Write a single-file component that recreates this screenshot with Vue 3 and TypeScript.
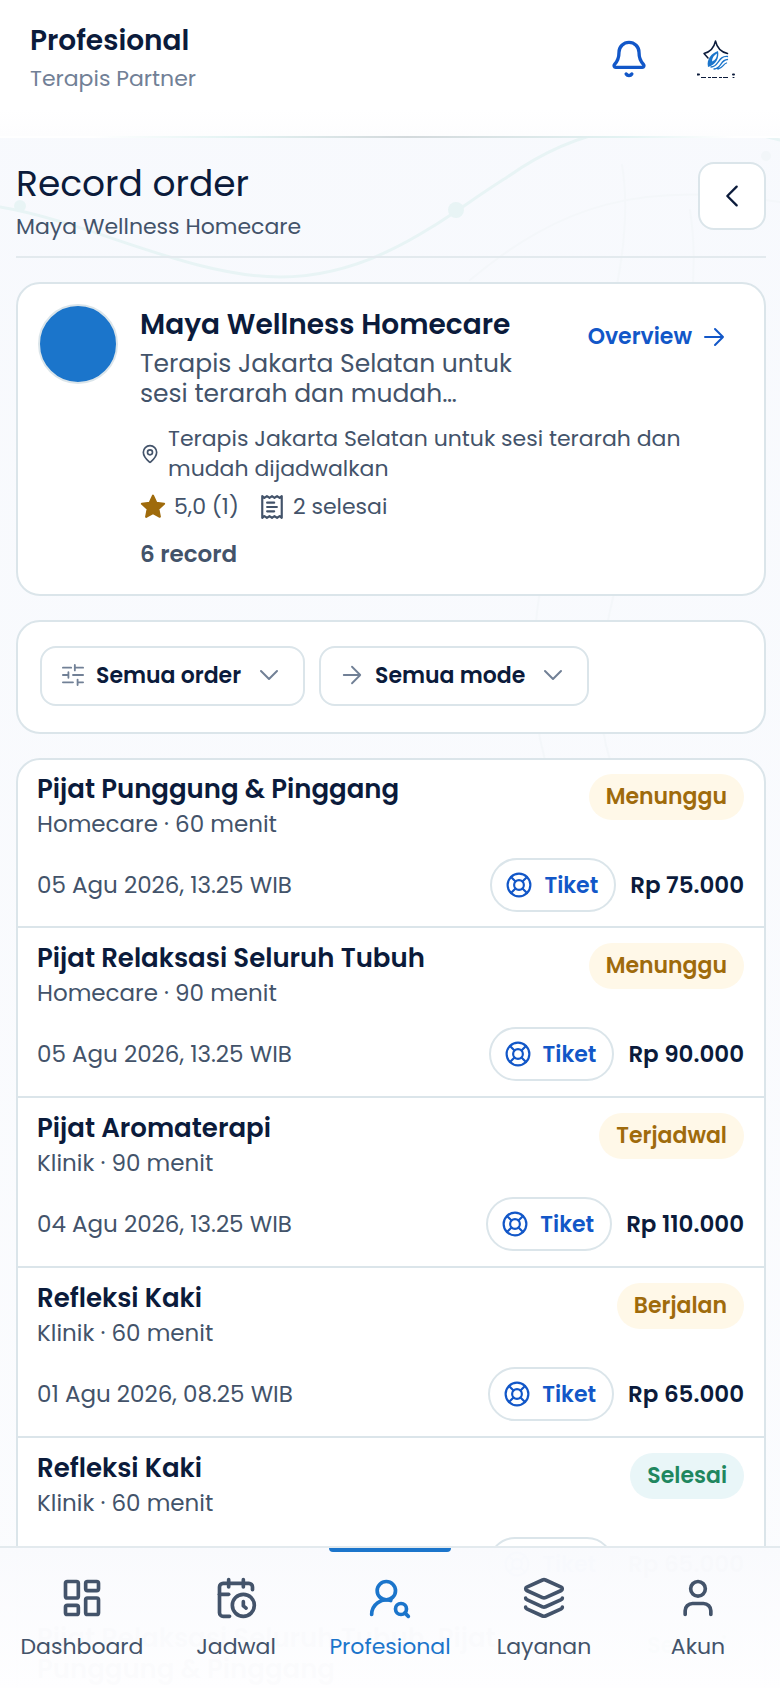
<script setup lang="ts">
interface Order {
  id: number
  title: string
  meta: string
  date: string
  price: string
  status: string
  tone: 'warn' | 'ok'
}

const orders: Order[] = [
  { id: 1, title: 'Pijat Punggung & Pinggang', meta: 'Homecare · 60 menit', date: '05 Agu 2026, 13.25 WIB', price: 'Rp 75.000', status: 'Menunggu', tone: 'warn' },
  { id: 2, title: 'Pijat Relaksasi Seluruh Tubuh', meta: 'Homecare · 90 menit', date: '05 Agu 2026, 13.25 WIB', price: 'Rp 90.000', status: 'Menunggu', tone: 'warn' },
  { id: 3, title: 'Pijat Aromaterapi', meta: 'Klinik · 90 menit', date: '04 Agu 2026, 13.25 WIB', price: 'Rp 110.000', status: 'Terjadwal', tone: 'warn' },
  { id: 4, title: 'Refleksi Kaki', meta: 'Klinik · 60 menit', date: '01 Agu 2026, 08.25 WIB', price: 'Rp 65.000', status: 'Berjalan', tone: 'warn' },
  { id: 5, title: 'Refleksi Kaki', meta: 'Klinik · 60 menit', date: '', price: 'Rp 65.000', status: 'Selesai', tone: 'ok' },
  { id: 6, title: 'Pijat Relaksasi Seluruh Tubuh, Pijat Punggung & Pinggang', meta: '', date: '', price: '', status: 'Selesai', tone: 'ok' },
]

interface Tab {
  label: string
  paths: string[]
  active?: boolean
}

const tabs: Tab[] = [
  { label: 'Dashboard', paths: ['M4 3h5a1 1 0 0 1 1 1v7a1 1 0 0 1-1 1H4a1 1 0 0 1-1-1V4a1 1 0 0 1 1-1z', 'M4 16h5a1 1 0 0 1 1 1v3a1 1 0 0 1-1 1H4a1 1 0 0 1-1-1v-3a1 1 0 0 1 1-1z', 'M15 12h5a1 1 0 0 1 1 1v7a1 1 0 0 1-1 1h-5a1 1 0 0 1-1-1v-7a1 1 0 0 1 1-1z', 'M15 3h5a1 1 0 0 1 1 1v3a1 1 0 0 1-1 1h-5a1 1 0 0 1-1-1V4a1 1 0 0 1 1-1z'] },
  { label: 'Jadwal', paths: ['M21 7.500V6a2 2 0 0 0-2-2H5a2 2 0 0 0-2 2v14a2 2 0 0 0 2 2h3.500', 'M16 2v4', 'M8 2v4', 'M3 10h5', 'M16 14v2.300l1.500 1.200', 'M22 16a6 6 0 1 1-12 0 6 6 0 0 1 12 0z'] },
  { label: 'Profesional', active: true, paths: ['M15 8a5 5 0 1 1-10 0 5 5 0 0 1 10 0z', 'M2 21a8 8 0 0 1 10.434-7.620', 'M21 18a3 3 0 1 1-6 0 3 3 0 0 1 6 0z', 'm22 22-1.900-1.900'] },
  { label: 'Layanan', paths: ['M12.800 2.200a2 2 0 0 0-1.600 0L2.600 6.100a1 1 0 0 0 0 1.800l8.600 3.900a2 2 0 0 0 1.600 0l8.600-3.900a1 1 0 0 0 0-1.800z', 'M2 12a1 1 0 0 0 .6.900l8.600 3.900a2 2 0 0 0 1.600 0l8.600-3.900A1 1 0 0 0 22 12', 'M2 17a1 1 0 0 0 .6.900l8.600 3.900a2 2 0 0 0 1.600 0l8.600-3.900A1 1 0 0 0 22 17'] },
  { label: 'Akun', paths: ['M19 21v-2a4 4 0 0 0-4-4H9a4 4 0 0 0-4 4v2', 'M16 7a4 4 0 1 1-8 0 4 4 0 0 1 8 0z'] },
]
</script>

<template>
  <div class="shell">
    <svg class="decor" viewBox="0 0 780 1688" preserveAspectRatio="none" fill="none" aria-hidden="true">
      <g stroke="#e8f4f5" stroke-width="3">
        <path d="M0 207C90 222 190 277 280 277C380 277 450 212 506 178C570 132 650 106 780 140" />
      </g>
      <circle cx="20" cy="206" r="6" fill="#e8f4f5" stroke="none" />
      <circle cx="456" cy="210" r="8" fill="#e8f4f5" stroke="none" />
      <circle cx="766" cy="156" r="5" fill="#f2f6f9" stroke="none" />
      <g stroke="#f4f7fa" stroke-width="2">
        <path d="M470 280C560 205 640 180 780 202" />
        <path d="M622 165C650 330 490 560 545 760" />
        <path d="M690 210C720 400 560 600 610 760" />
      </g>
    </svg>

    <header class="topbar">
      <div class="who">
        <strong class="who-title">Profesional</strong>
        <span class="who-sub">Terapis Partner</span>
      </div>
      <button class="bell" type="button" aria-label="Notifikasi">
        <svg viewBox="0 0 24 24"><path d="M10.300 21a2 2 0 0 0 3.400 0" /><path d="M3.300 15.300A1 1 0 0 0 4 17h16a1 1 0 0 0 .7-1.700C19.400 14 18 12.500 18 8A6 6 0 0 0 6 8c0 4.500-1.400 6-2.700 7.300" /></svg>
      </button>
      <a class="logo" href="#" aria-label="Beranda">
        <svg viewBox="0 0 40 40" fill="none">
          <path d="M11 19L7 14.500C13 13 17 9 18.500 2C20 9 24 13 30.500 14.500" stroke="#0b1b3b" stroke-width="1.500" />
          <path d="M11 28C9 20 15 14 21 12C22.500 19 19 25.500 11 28z" fill="#1b75cb" stroke="none" />
          <path d="M15 22.500C15 19 17 16 20 14.500C20 18.500 18.500 21 15 22.500z" fill="#fff" stroke="none" />
          <path d="M14 28C22 28 21 16.500 30.500 17.500M17 30C25 29 23 21 30.500 20.500M21 30C26 29 26 25 29.500 24" stroke="#1b75cb" stroke-width="1.300" />
          <path d="M0 35.500h2M36 35.500h1" stroke="#0b1b3b" stroke-width="2" />
          <path d="M4 38.500h28" stroke="#0b1b3b" stroke-width="1" stroke-linecap="butt" stroke-dasharray="5 2 3 1" />
          <path d="M36 38.500h1" stroke="#0b1b3b" stroke-width="1" />
        </svg>
      </a>
    </header>

    <main class="content">
      <div class="heading">
        <div>
          <h1>Record order</h1>
          <p>Maya Wellness Homecare</p>
        </div>
        <button class="back" type="button" aria-label="Kembali">
          <svg viewBox="0 0 24 24"><path d="m16 4-8 8 8 8" /></svg>
        </button>
      </div>

      <section class="card profile">
        <div class="avatar"></div>
        <div class="details">
          <div class="details-top">
            <div>
              <h2>Maya Wellness Homecare</h2>
              <p class="tagline">Terapis Jakarta Selatan untuk<br />sesi terarah dan mudah…</p>
            </div>
            <a class="overview" href="#">Overview
              <svg viewBox="0 0 24 24"><path d="M3 12h18M13 4l8 8-8 8" /></svg>
            </a>
          </div>
          <div class="place">
            <svg viewBox="0 0 24 24"><path d="M20 10c0 5-5.500 10.200-7.400 11.800a1 1 0 0 1-1.200 0C9.500 20.200 4 15 4 10a8 8 0 0 1 16 0" /><circle cx="12" cy="10" r="3" /></svg>
            <span>Terapis Jakarta Selatan untuk sesi terarah dan mudah dijadwalkan</span>
          </div>
          <div class="stats">
            <svg class="star" viewBox="0 0 24 24"><path d="m12 1.500 3 6.600 7.200.9-5.300 4.900 1.400 7.100L12 17.600l-6.300 3.400 1.400-7.100L1.800 9l7.200-.9z" /></svg>
            <span>5,0 (1)</span>
            <svg class="receipt" viewBox="0 0 24 24"><path d="M3 2l2 1.500L7.300 2 9.700 3.500 12 2l2.300 1.500L16.700 2 19 3.500 21 2v20l-2-1.500-2.300 1.500-2.400-1.500L12 22l-2.300-1.500L7.300 22 5 20.500 3 22zM7.500 8H14M7.500 12h9M7.500 16H14" /></svg>
            <span>2 selesai</span>
          </div>
          <strong class="count">6 record</strong>
        </div>
      </section>

      <section class="card filters">
        <button class="filter" type="button">
          <svg viewBox="0 0 24 24"><path d="M1 4h9M14 1v6M14 4h9M1 12h6M7 9v6M12 12h11M1 20h11M17 17v6M17 20h6" /></svg>
          <span>Semua order</span>
          <svg class="chev" viewBox="0 0 24 24"><path d="m4 8 8 8 8-8" /></svg>
        </button>
        <button class="filter" type="button">
          <svg viewBox="0 0 24 24"><path d="M3 12h18M12 3l9 9-9 9" /></svg>
          <span>Semua mode</span>
          <svg class="chev" viewBox="0 0 24 24"><path d="m4 8 8 8 8-8" /></svg>
        </button>
      </section>

      <section class="card orders">
        <article v-for="o in orders" :key="o.id" class="order">
          <div class="order-top">
            <div>
              <h3>{{ o.title }}</h3>
              <p>{{ o.meta }}</p>
            </div>
            <span class="badge" :class="o.tone">{{ o.status }}</span>
          </div>
          <div class="order-bottom">
            <time>{{ o.date }}</time>
            <button class="ticket" type="button">
              <svg viewBox="0 0 24 24"><circle cx="12" cy="12" r="10.500" /><circle cx="12" cy="12" r="4.500" /><path d="m4.600 4.600 4.200 4.200M15.200 8.800l4.200-4.200M15.200 15.200l4.200 4.200M8.800 15.200l-4.200 4.200" /></svg>
              Tiket
            </button>
            <strong>{{ o.price }}</strong>
          </div>
        </article>
      </section>
    </main>

    <nav class="tabs">
      <a v-for="t in tabs" :key="t.label" href="#" class="tab" :class="{ active: t.active }">
        <svg viewBox="0 0 24 24"><path v-for="d in t.paths" :key="d" :d="d" /></svg>
        <span>{{ t.label }}</span>
      </a>
    </nav>
  </div>
</template>

<style>
body {
  margin: 0;
  background: #f9fafd;
}
</style>

<style scoped>
.shell {
  position: relative;
  display: flex;
  flex-direction: column;
  height: 100vh;
  overflow: hidden;
  background: linear-gradient(#f7f9fd, #fbfcfe);
  color: #0b1b3b;
  font-family: Poppins, Inter, "Noto Sans", sans-serif;
  font-size: 22px;
}
.shell * {
  box-sizing: border-box;
}
svg {
  fill: none;
  stroke: currentColor;
  stroke-width: 2;
  stroke-linecap: round;
  stroke-linejoin: round;
  flex: none;
}
.decor {
  position: absolute;
  inset: 0;
  width: 100%;
  height: 100%;
}
h1, h2, h3, p {
  margin: 0;
}
button {
  font: inherit;
  color: inherit;
  cursor: pointer;
}
a {
  color: inherit;
  text-decoration: none;
}
.topbar {
  position: relative;
  display: flex;
  align-items: center;
  flex: none;
  height: 138px;
  padding: 0 43px 18px 30px;
  background: linear-gradient(#fff 80%, #fdfdfe);
  border-bottom: 2px solid;
  border-image: linear-gradient(90deg, #fff 12%, #e3f3f3 30%, #d3d9dc 52%, #e3f3f3 80%, #fff 94%) 1;
}
.who {
  display: flex;
  flex-direction: column;
  flex: 1;
}
.who-title {
  font-size: 28px;
  line-height: 40px;
  font-weight: 600;
}
.who-sub {
  line-height: 36px;
  color: #718096;
}
.bell {
  display: flex;
  padding: 0;
  margin-right: 48px;
  border: 0;
  background: none;
  color: #1257c8;
}
.bell svg {
  width: 40px;
  height: 40px;
}
.logo svg {
  display: block;
  width: 40px;
  height: 40px;
}
.content {
  position: relative;
  display: flex;
  flex-direction: column;
  flex: none;
  gap: 24px;
  padding: 24px 14px 0 16px;
}
.heading {
  display: flex;
  justify-content: space-between;
  align-items: flex-start;
  height: 96px;
  border-bottom: 2px solid #e3eaee;
}
h1 {
  font-size: 36px;
  line-height: 44px;
  font-weight: 400;
}
.heading p {
  line-height: 42px;
  color: #43536a;
}
.back {
  display: flex;
  align-items: center;
  justify-content: center;
  width: 68px;
  height: 68px;
  padding: 0;
  border: 2px solid #dbe5ea;
  border-radius: 16px;
  background: #fff;
}
.back svg {
  width: 28px;
  height: 28px;
}
.card {
  border: 2px solid #dbe5ea;
  border-radius: 24px;
  background: #fff;
}
.profile {
  display: flex;
  gap: 22px;
  padding: 20px 38px 20px 20px;
}
.avatar {
  flex: none;
  width: 80px;
  height: 80px;
  border: 2px solid #dbe5ea;
  border-radius: 50%;
  background: #1b75cb;
}
.details {
  flex: 1;
  color: #43536a;
}
.details-top {
  display: flex;
  justify-content: space-between;
}
h2 {
  font-size: 28px;
  line-height: 42px;
  font-weight: 600;
  color: #0b1b3b;
}
.tagline {
  margin-top: 3px;
  font-size: 25px;
  line-height: 30px;
}
.overview {
  display: flex;
  align-items: center;
  align-self: flex-start;
  gap: 10px;
  line-height: 66px;
  font-weight: 600;
  color: #1257c8;
}
.overview svg {
  width: 24px;
  height: 24px;
}
.place {
  display: flex;
  align-items: center;
  gap: 8px;
  margin-top: 15px;
  line-height: 30px;
}
.place svg {
  width: 20px;
  height: 20px;
}
.stats {
  display: flex;
  align-items: center;
  gap: 8px;
  margin-top: 7px;
  line-height: 32px;
}
.stats svg {
  width: 26px;
  height: 26px;
}
.stats .star {
  fill: #9f6b0c;
  stroke: #9f6b0c;
}
.stats .receipt {
  margin-left: 12px;
}
.count {
  display: block;
  margin-top: 11px;
  font-size: 23px;
  line-height: 40px;
  font-weight: 600;
}
.filters {
  display: flex;
  gap: 14px;
  padding: 24px 22px 26px;
}
.filter {
  display: flex;
  align-items: center;
  gap: 12px;
  height: 60px;
  padding: 0 22px 2px 20px;
  border: 2px solid #dbe5ea;
  border-radius: 16px;
  background: #fff;
  font-weight: 600;
}
.filter svg {
  width: 22px;
  height: 22px;
  color: #718096;
}
.filter .chev {
  width: 24px;
  height: 24px;
  margin-left: 4px;
}
.orders {
  overflow: hidden;
}
.order {
  min-height: 170px;
  padding: 15px 20px 15px 19px;
  border-bottom: 2px solid #dbe5ea;
}
.order:first-child {
  min-height: 168px;
  padding: 14px 20px 14px 19px;
}
.order-top {
  display: flex;
  justify-content: space-between;
  align-items: flex-start;
}
h3 {
  font-size: 26px;
  line-height: 31px;
  font-weight: 600;
}
.order p {
  margin-top: 1px;
  font-size: 23px;
  line-height: 36px;
  color: #43536a;
}
.badge {
  padding: 0 17px;
  border-radius: 24px;
  line-height: 46px;
  font-weight: 600;
}
.warn {
  background: #fff8e8;
  color: #9f6b0c;
}
.ok {
  background: #e9f6f8;
  color: #1f875f;
}
.order-bottom {
  display: flex;
  align-items: center;
  gap: 14px;
  margin-top: 16px;
  font-size: 23px;
}
.order time {
  flex: 1;
  color: #43536a;
}
.order-bottom strong {
  font-weight: 600;
}
.ticket {
  display: flex;
  align-items: center;
  gap: 12px;
  height: 54px;
  padding: 0 16px 0 14px;
  border: 2px solid #dbe5ea;
  border-radius: 28px;
  background: #fff;
  font-size: 22px;
  font-weight: 600;
  color: #1257c8;
}
.ticket svg {
  width: 26px;
  height: 26px;
}
.tabs {
  position: absolute;
  left: 0;
  right: 0;
  bottom: 0;
  display: grid;
  grid-template-columns: repeat(5, 1fr);
  height: 142px;
  padding: 0 5px;
  border-top: 2px solid #e3eaee;
  background: linear-gradient(#f9fafdfd, #fefefffc);
}
.tab {
  display: flex;
  flex-direction: column;
  align-items: center;
  justify-self: center;
  gap: 10px;
  line-height: 34px;
  color: #43536a;
}
.tab::before {
  content: "";
  align-self: stretch;
  height: 4px;
  margin-bottom: 14px;
  border-radius: 0 0 4px 4px;
}
.tab svg {
  width: 44px;
  height: 44px;
}
.tab.active {
  color: #1b75cb;
}
.tab.active::before {
  background: #1b75cb;
}
</style>
